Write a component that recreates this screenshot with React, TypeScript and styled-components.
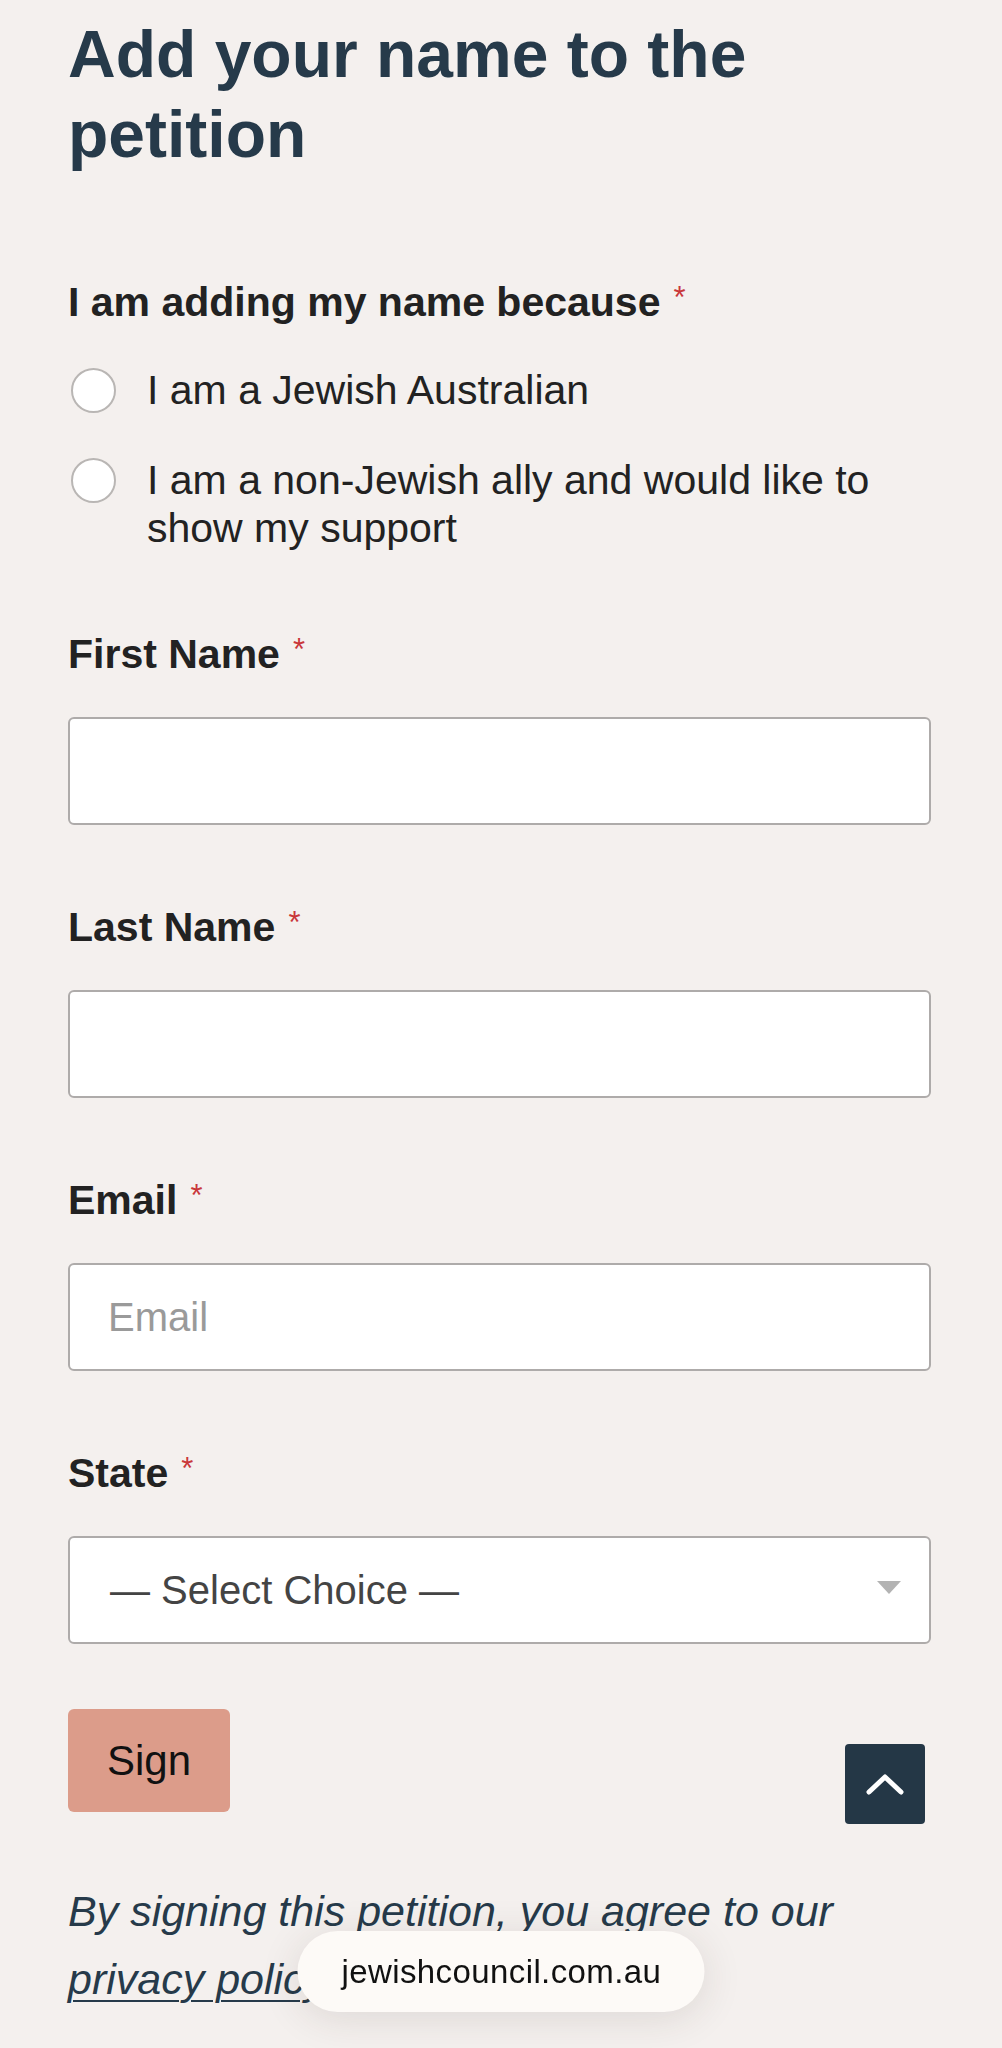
import React from "react";
import styled, { createGlobalStyle } from "styled-components";

const GlobalStyle = createGlobalStyle`
  html, body {
    margin: 0;
    padding: 0;
    background: #f4f0ee;
  }
  body {
    font-family: "Liberation Sans", Arial, sans-serif;
    color: #222;
  }
`;

const Page = styled.main`
  padding: 14px 71px 40px 68px;
  min-height: 2048px;
  box-sizing: border-box;
`;

const Heading = styled.h1`
  margin: 0;
  font-size: 66px;
  line-height: 80px;
  font-weight: 700;
  color: #263a4a;
`;

const Form = styled.form`
  display: flex;
  flex-direction: column;
  margin-top: 104px;
`;

const Field = styled.div`
  display: flex;
  flex-direction: column;
  margin-bottom: 78px;
`;

const Label = styled.label<{ gap?: number }>`
  display: block;
  font-size: 41px;
  line-height: 48px;
  font-weight: 700;
  color: #222;
  margin-bottom: ${(p) => p.gap ?? 35}px;
`;

const Required = styled.span`
  color: #c9373a;
  font-size: 31px;
  font-weight: 400;
  margin-left: 13px;
  position: relative;
  top: -8px;
`;

const Options = styled.div`
  display: flex;
  flex-direction: column;
  gap: 42px;
`;

const Option = styled.label`
  display: flex;
  align-items: flex-start;
  gap: 31px;
  font-size: 41px;
  line-height: 48px;
  color: #222;
  padding-left: 3px;
`;

const Radio = styled.span`
  flex: none;
  width: 41px;
  height: 41px;
  margin-top: 2px;
  border-radius: 50%;
  background: #fff;
  border: 2px solid #b9b6b4;
`;

const TextInput = styled.input`
  box-sizing: border-box;
  width: 100%;
  height: 108px;
  padding: 0 38px;
  border: 2px solid #aeabaa;
  border-radius: 6px;
  background: #fff;
  font-family: "Liberation Sans", Arial, sans-serif;
  font-size: 40px;
  color: #222;
  outline: none;
  &::placeholder {
    color: #9a9a9a;
  }
`;

const SelectBox = styled.div`
  box-sizing: border-box;
  height: 108px;
  padding: 0 28px 0 40px;
  display: flex;
  align-items: center;
  justify-content: space-between;
  border: 2px solid #aeabaa;
  border-radius: 6px;
  background: #fff;
  font-size: 40px;
  color: #444;
`;

const Caret = styled.span`
  width: 0;
  height: 0;
  border-left: 12px solid transparent;
  border-right: 12px solid transparent;
  border-top: 13px solid #b3b3b3;
  margin-top: -6px;
`;

const SignButton = styled.button`
  align-self: flex-start;
  width: 162px;
  height: 103px;
  margin-top: -13px;
  border: none;
  border-radius: 6px;
  background: #dc9c8a;
  color: #111;
  font-family: "Liberation Sans", Arial, sans-serif;
  font-size: 42px;
`;

const Agreement = styled.p`
  margin: 65px 0 0;
  font-size: 43px;
  line-height: 68px;
  font-style: italic;
  color: #263a4a;
  a {
    color: inherit;
    text-decoration: underline;
    text-underline-offset: 6px;
    text-decoration-thickness: 2px;
  }
`;

const ScrollTop = styled.button`
  position: fixed;
  right: 77px;
  bottom: 224px;
  width: 80px;
  height: 80px;
  border: none;
  border-radius: 4px;
  background: #243746;
  display: flex;
  align-items: center;
  justify-content: center;
  padding: 0;
`;

const Toast = styled.div`
  position: fixed;
  left: 50%;
  bottom: 36px;
  transform: translateX(-50%);
  width: 407px;
  height: 81px;
  box-sizing: border-box;
  padding-left: 44px;
  display: flex;
  align-items: center;
  border-radius: 41px;
  background: #fdfaf7;
  box-shadow: 0 6px 40px rgba(60, 40, 30, 0.12);
  font-size: 33px;
  letter-spacing: 0.4px;
  color: #111;
`;

const fields = [
  { id: "first", label: "First Name", placeholder: "" },
  { id: "last", label: "Last Name", placeholder: "" },
  { id: "email", label: "Email", placeholder: "Email" },
];

export default function App() {
  return (
    <>
      <GlobalStyle />
      <Page>
        <Heading>Add your name to the petition</Heading>
        <Form onSubmit={(e) => e.preventDefault()}>
          <Field>
            <Label gap={36}>
              I am adding my name because<Required>*</Required>
            </Label>
            <Options>
              <Option>
                <Radio />
                <span>I am a Jewish Australian</span>
              </Option>
              <Option>
                <Radio />
                <span>I am a non-Jewish ally and would like to show my support</span>
              </Option>
            </Options>
          </Field>

          {fields.map((f) => (
            <Field key={f.id}>
              <Label htmlFor={f.id}>
                {f.label}
                <Required>*</Required>
              </Label>
              <TextInput id={f.id} placeholder={f.placeholder} />
            </Field>
          ))}

          <Field>
            <Label>
              State<Required>*</Required>
            </Label>
            <SelectBox>
              <span>— Select Choice —</span>
              <Caret />
            </SelectBox>
          </Field>

          <SignButton type="submit">Sign</SignButton>
        </Form>

        <Agreement>
          By signing this petition, you agree to our <a href="#">privacy policy</a>.
        </Agreement>
      </Page>

      <ScrollTop aria-label="Back to top">
        <svg width="38" height="22" viewBox="0 0 38 22" fill="none">
          <polyline
            points="3,19 19,4 35,19"
            stroke="#fff"
            strokeWidth="5"
            strokeLinecap="round"
            strokeLinejoin="round"
          />
        </svg>
      </ScrollTop>

      <Toast>jewishcouncil.com.au</Toast>
    </>
  );
}
